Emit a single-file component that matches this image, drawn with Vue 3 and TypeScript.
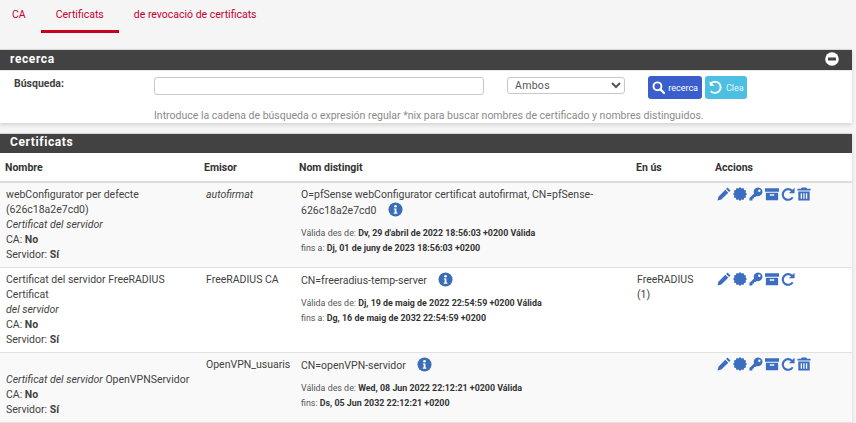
<template>
  <div class="page">
    <ul class="tabs">
      <li v-for="tab in tabs" :key="tab" class="tab" :class="{ active: tab === 'Certificats' }">{{ tab }}</li>
    </ul>

    <section class="panel search-panel">
      <h2 class="panel-title">
        <span>recerca</span>
        <svg class="collapse" viewBox="0 0 14 14" width="14" height="14">
          <circle cx="7" cy="7" r="6.8" fill="#fff" />
          <rect x="3" y="5.6" width="8" height="2.8" rx=".5" fill="#424242" />
        </svg>
      </h2>
      <div class="search-body">
        <div class="search-row">
          <label class="search-label">Búsqueda:</label>
          <input class="search-input" type="text" />
          <select class="search-select"><option>Ambos</option></select>
          <button class="btn btn-primary">
            <svg viewBox="0 0 16 16" width="15" height="15">
              <circle cx="6.6" cy="6.6" r="4.8" fill="none" stroke="#fff" stroke-width="2.3" />
              <path d="M10.2 10.2 14.6 14.6" stroke="#fff" stroke-width="2.8" stroke-linecap="round" />
            </svg>
            <span>recerca</span>
          </button>
          <button class="btn btn-info">
            <svg viewBox="0 0 16 16" width="15" height="15">
              <path d="M3.2 3.6A6 6 0 1 1 3 11.8" fill="none" stroke="#fff" stroke-width="2" />
              <path d="M1.6 1.2 2 6.4 7 6z" fill="#fff" />
            </svg>
            <span>Clea</span>
          </button>
        </div>
        <p class="search-help">Introduce la cadena de búsqueda o expresión regular *nix para buscar nombres de certificado y nombres distinguidos.</p>
      </div>
    </section>

    <section class="panel cert-panel">
      <h2 class="panel-title"><span>Certificats</span></h2>
      <table class="cert-table">
        <colgroup>
          <col class="c-name" /><col class="c-issuer" /><col class="c-dn" /><col class="c-use" /><col class="c-actions" />
        </colgroup>
        <thead>
          <tr>
            <th>Nombre</th><th>Emisor</th><th>Nom distingit</th><th>En ús</th><th>Accions</th>
          </tr>
        </thead>
        <tbody>
          <tr v-for="cert in certs" :key="cert.dn" class="cert-row">
            <td class="name-cell">
              <div :class="{ 'push-down': cert.pushDown }">
                <template v-if="cert.inlineKind"><em>{{ cert.kind }}</em> {{ cert.name }}<br /></template>
                <template v-else>
                  <span v-html="cert.name"></span><br />
                  <em v-html="cert.kind"></em><br />
                </template>
                CA: <b>No</b><br />
                Servidor: <b>Sí</b>
              </div>
            </td>
            <td class="issuer-cell">
              <em v-if="cert.selfSigned">{{ cert.issuer }}</em>
              <template v-else>{{ cert.issuer }}</template>
            </td>
            <td class="dn-cell">
              <div class="dn" :style="{ width: cert.dnWidth }">
                {{ cert.dn }}
                <span class="info">
                  <svg viewBox="0 0 16 16" width="15" height="15">
                    <circle cx="8" cy="8" r="7.5" fill="#3b6db5" />
                    <circle cx="8" cy="4.5" r="1.4" fill="#fff" />
                    <path d="M6.2 6.9H9v4.4h1v1.2H6.1v-1.2h1v-3.2h-.9z" fill="#fff" />
                  </svg>
                </span>
              </div>
              <div class="dates">
                {{ cert.fromLabel }} <b>{{ cert.from }}</b> <b>Válida</b><br />
                {{ cert.toLabel }} <b>{{ cert.to }}</b>
              </div>
            </td>
            <td class="use-cell"><span v-html="cert.use"></span></td>
            <td class="actions-cell">
              <svg class="act" viewBox="0 0 16 16" width="14" height="14">
                <path d="M12 .6 15.400 4 13.800 5.600 10.400 2.200zM9.500 3.100 12.900 6.500 5 14.400.6 15.400 1.600 11z" />
              </svg>
              <svg class="act" viewBox="0 0 16 16" width="14" height="14">
                <polygon :points="burst" />
              </svg>
              <svg class="act" viewBox="0 0 16 16" width="14" height="14">
                <path fill-rule="evenodd" d="M10.500 .5a5 5 0 1 1-1.800 9.700L7.500 11.500H5.800v1.700H4V15L3.200 15.500H.5v-2.800l5.300-5.300A5 5 0 0 1 10.500 .5zm1.300 2.300a1.400 1.400 0 1 0 0 2.800 1.400 1.400 0 0 0 0-2.800z" />
              </svg>
              <svg class="act" viewBox="0 0 16 16" width="14" height="14">
                <path fill-rule="evenodd" d="M0 1.500h16v4H0zM1 6.500h14v8.500H1zM5.500 8.200v1.700h5V8.200z" />
              </svg>
              <svg class="act" viewBox="0 0 16 16" width="14" height="14">
                <path d="M15.500 .8v6.400H9.100l2.300-2.300A4.900 4.900 0 1 0 12.400 11l1.900 1.400A7.300 7.300 0 1 1 13.100 3.200z" />
              </svg>
              <svg v-if="cert.canDelete" class="act" viewBox="0 0 16 16" width="14" height="14">
                <path fill-rule="evenodd" d="M5.500 .5h5l1 1.500H15.500V4H.5V2h4zM1.500 5h13V15.500H1.500zM4.200 7v6.500h1.500V7zm3 0v6.500h1.500V7zm3 0v6.500h1.500V7z" />
              </svg>
            </td>
          </tr>
        </tbody>
      </table>
    </section>
  </div>
</template>

<script setup lang="ts">
interface Cert {
  name: string
  kind: string
  inlineKind?: boolean
  pushDown?: boolean
  issuer: string
  selfSigned?: boolean
  dn: string
  dnWidth: string
  fromLabel: string
  from: string
  toLabel: string
  to: string
  use: string
  canDelete: boolean
}

const tabs = ['CA', 'Certificats', 'de revocació de certificats']

// certificate badge: a disc with 12 small teeth
const burst = Array.from({ length: 24 }, (_, i) => {
  const r = i % 2 ? 6.6 : 8
  const a = (i * Math.PI) / 12
  return `${(8 + r * Math.cos(a)).toFixed(2)},${(8 + r * Math.sin(a)).toFixed(2)}`
}).join(' ')

const certs: Cert[] = [
  {
    name: 'webConfigurator per defecte<br>(626c18a2e7cd0)',
    kind: 'Certificat del servidor',
    issuer: 'autofirmat',
    selfSigned: true,
    dn: 'O=pfSense webConfigurator certificat autofirmat, CN=pfSense-626c18a2e7cd0',
    dnWidth: '300px',
    fromLabel: 'Válida des de:',
    from: "Dv, 29 d'abril de 2022 18:56:03 +0200",
    toLabel: 'fins a:',
    to: 'Dj, 01 de juny de 2023 18:56:03 +0200',
    use: '',
    canDelete: true,
  },
  {
    name: 'Certificat del servidor FreeRADIUS<br>Certificat',
    kind: 'del servidor',
    issuer: 'FreeRADIUS CA',
    dn: 'CN=freeradius-temp-server',
    dnWidth: 'auto',
    fromLabel: 'Válida des de:',
    from: 'Dj, 19 de maig de 2022 22:54:59 +0200',
    toLabel: 'fins a:',
    to: 'Dg, 16 de maig de 2032 22:54:59 +0200',
    use: 'FreeRADIUS<br>(1)',
    canDelete: false,
  },
  {
    name: 'OpenVPNServidor',
    kind: 'Certificat del servidor',
    inlineKind: true,
    pushDown: true,
    issuer: 'OpenVPN_usuaris',
    dn: 'CN=openVPN-servidor',
    dnWidth: 'auto',
    fromLabel: 'Válida des de:',
    from: 'Wed, 08 Jun 2022 22:12:21 +0200',
    toLabel: 'fins:',
    to: 'Ds, 05 Jun 2032 22:12:21 +0200',
    use: '',
    canDelete: true,
  },
]
</script>

<style>
html,
body {
  margin: 0;
  background: #f5f5f5;
  overflow: hidden;
}
</style>

<style scoped>
.page {
  height: 423px;
  overflow: hidden;
  font-family: Roboto, "Liberation Sans", sans-serif;
  font-size: 10.5px;
  line-height: 15px;
  color: #424242;
  background: #f5f5f5;
}

.tabs {
  display: flex;
  height: 33px;
  margin: 0 0 16px;
  padding: 0;
  list-style: none;
}

.tab {
  padding: 7px 15px 0;
  color: #c4002f;
  font-size: 10.5px;
  box-sizing: border-box;
}

.tab:first-child {
  padding: 7px 0 0 12px;
  margin-right: 15px;
}

.tab.active {
  border-bottom: 3px solid #c8001e;
}

.panel {
  margin-right: 4px;
  background: #fff;
  box-shadow: 0 2px 4px rgba(0, 0, 0, 0.14);
}

.panel-title {
  display: flex;
  align-items: center;
  justify-content: space-between;
  height: 21px;
  margin: 0;
  padding: 0 13px 2px 10px;
  background: #424242;
  border-top: 1px solid #d8d8d8;
  box-sizing: border-box;
  color: #fff;
  font-size: 12px;
  font-weight: 700;
  letter-spacing: 0.6px;
}

.cert-panel .panel-title {
  height: 20px;
}

.search-body {
  height: 53px;
  border-top: 1px solid #e8e8e8;
  box-sizing: border-box;
}

.search-row {
  display: flex;
  align-items: flex-start;
  padding-top: 5px;
  height: 31px;
  box-sizing: border-box;
}

.search-label {
  width: 140px;
  padding: 0 0 0 14px;
  font-weight: 700;
}

.search-input {
  width: 330px;
  height: 18px;
  margin: 1px 23px 0 0;
  padding: 0;
  background: #fff;
  border: 1px solid #c8c8c8;
  border-radius: 3px;
  box-sizing: border-box;
}

.search-select {
  width: 118px;
  height: 17px;
  margin: 1px 23px 0 0;
  padding: 0 0 0 3px;
  background: #fff;
  border: 1px solid #c8c8c8;
  border-radius: 3px;
  color: #555;
  font: 10.5px Roboto, "Liberation Sans", sans-serif;
  letter-spacing: 0.3px;
}

.btn {
  display: flex;
  align-items: center;
  gap: 3px;
  height: 23px;
  padding: 0 4px;
  border: 0;
  border-radius: 3px;
  color: #fff;
  font: 9px Roboto, "Liberation Sans", sans-serif;
}

.btn-primary {
  width: 54px;
  background: #3a5fcd;
  margin-right: 3px;
}

.btn-info {
  width: 42px;
  background: #4dbfe2;
  color: #e6f6fb;
  padding: 0 3px;
}

.search-help {
  margin: 0;
  padding: 7px 0 0 154px;
  color: #8a8a8a;
  line-height: 14px;
  white-space: nowrap;
}

.cert-panel {
  margin-top: 10px;
}

.cert-table {
  width: 100%;
  table-layout: fixed;
  border-collapse: collapse;
}

.c-name { width: 199px; }
.c-issuer { width: 95px; }
.c-dn { width: 337px; }
.c-use { width: 79px; }

.cert-table th {
  height: 29px;
  padding: 0 0 0 5px;
  text-align: left;
  font-weight: 700;
  color: #333;
  border-bottom: 2px solid #ddd;
  box-sizing: border-box;
}

.cert-row td {
  padding: 4px 0 0 7px;
  vertical-align: top;
  border-bottom: 1px solid #e2e2e2;
  box-sizing: border-box;
}

.cert-row {
  height: 85px;
}

.cert-row:nth-child(odd) {
  background: #f9f9f9;
}

.cert-row:last-child {
  height: 70px;
}

.name-cell {
  padding-left: 6px !important;
}

.use-cell {
  padding-left: 6px !important;
}

.push-down {
  padding-top: 15px;
}

.dn {
  min-height: 28px;
}

.cert-row:not(:first-child) .dn {
  min-height: 0;
}

.info {
  display: inline-block;
  margin-left: 8.5px;
  vertical-align: -3px;
}

.dates {
  margin-top: 5px;
  font-size: 8.9px;
  line-height: 15px;
  color: #555;
}

.dates b {
  color: #333;
}

.actions-cell {
  white-space: nowrap;
  font-size: 0;
  line-height: 0;
}

.act {
  margin-right: 2px;
  fill: #3b6dc0;
}
</style>
